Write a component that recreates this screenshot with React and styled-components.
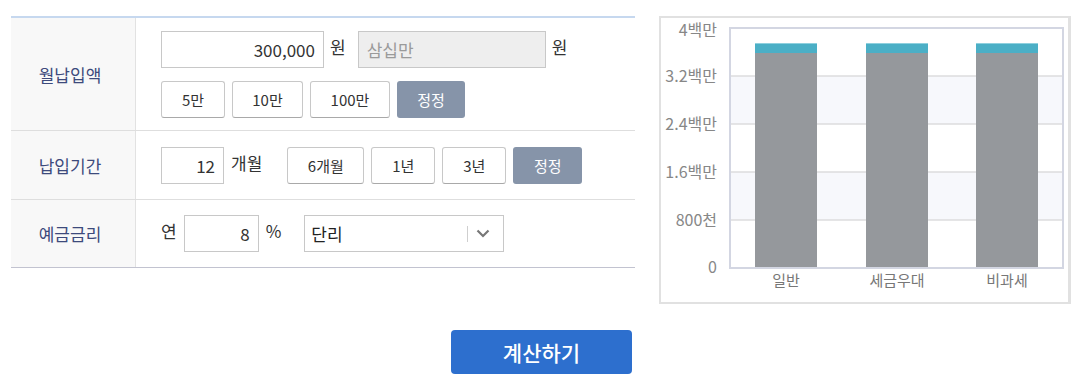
import React from "react";
import styled, { createGlobalStyle } from "styled-components";

const Global = createGlobalStyle`
  html, body { margin: 0; padding: 0; background: #fff; }
  body { font-family: "Noto Sans CJK KR", "Noto Sans", sans-serif; color: #333; }
  * { box-sizing: border-box; }
`;

const Page = styled.div`
  padding: 16px 0 0 11px;
  width: 1084px;
  height: 383px;
`;

const TopRow = styled.div`
  display: flex;
  align-items: flex-start;
  gap: 24px;
`;

const Table = styled.div`
  width: 624px;
  border-top: 2px solid #c6d8ef;
  border-bottom: 1px solid #c2c3d0;
`;

const Row = styled.div`
  display: flex;
  height: ${(p) => p.$h}px;
  border-bottom: ${(p) => (p.$last ? "none" : "1px solid #dedede")};
`;

const Label = styled.div`
  width: 125px;
  flex: none;
  background: #f8f8f8;
  border-right: 1px solid #e2e2e2;
  display: flex;
  align-items: center;
  justify-content: center;
  font-size: 17px;
  color: #3d4a7c;
  padding-right: 6px;
`;

const Cell = styled.div`
  flex: 1;
  display: flex;
  flex-direction: column;
  justify-content: center;
  gap: 13px;
  padding-left: 25px;
`;

const Line = styled.div`
  display: flex;
  align-items: center;
  gap: ${(p) => p.$gap ?? 8}px;
`;

const Input = styled.div`
  width: ${(p) => p.$w}px;
  height: ${(p) => p.$ht ?? 37}px;
  border: 1px solid #c8c8c8;
  background: ${(p) => (p.$readonly ? "#eeeeee" : "#fff")};
  color: ${(p) => (p.$readonly ? "#9a9a9a" : "#333")};
  font-size: 17px;
  display: flex;
  align-items: center;
  justify-content: ${(p) => (p.$readonly ? "flex-start" : "flex-end")};
  padding: 0 8px;
  line-height: 1;
`;

const Unit = styled.span`
  font-size: 17px;
  color: #333;
  line-height: 1;
  margin-top: -6px;
`;

const Btn = styled.div`
  width: ${(p) => p.$w}px;
  height: 37px;
  border: 1px solid #c8c8c8;
  border-bottom-color: #a9a9a9;
  border-radius: 3px;
  background: #fff;
  font-size: 15px;
  color: #333;
  display: flex;
  align-items: center;
  justify-content: center;
  line-height: 1;
`;

const ResetBtn = styled(Btn)`
  background: #8694a9;
  border: none;
  color: #fff;
`;

const Select = styled.div`
  width: 200px;
  height: 37px;
  border: 1px solid #c8c8c8;
  display: flex;
  align-items: center;
  font-size: 17px;
  color: #222;
  padding-left: 6px;
  margin-left: 16px;
  line-height: 1;
`;

const SelectText = styled.span`
  flex: 1;
`;

const Divider = styled.span`
  width: 1px;
  height: 16px;
  background: #cfcfcf;
  margin-right: 8px;
`;

const Chevron = styled.span`
  width: 27px;
  display: flex;
  align-items: center;
`;

const ChartPanel = styled.div`
  width: 412px;
  height: 288px;
  border: 2px solid #e1e1e1;
  border-right-width: 3px;
`;

const ChartSvg = styled.svg`
  display: block;
  overflow: visible;
`;

const CalcBtn = styled.div`
  margin: 26px 0 0 440px;
  width: 181px;
  height: 44px;
  border-radius: 4px;
  background: #2d6fce;
  color: #fff;
  font-size: 21px;
  font-weight: 500;
  display: flex;
  align-items: center;
  justify-content: center;
  line-height: 1;
`;

const Chart = () => {
  const grid = [
    { y: 10, ty: 14, label: "4백만" },
    { y: 58, ty: 60, label: "3.2백만" },
    { y: 106, ty: 108, label: "2.4백만" },
    { y: 154, ty: 156, label: "1.6백만" },
    { y: 202, ty: 204, label: "800천" },
    { y: 250, ty: 251, label: "0" },
  ];
  const bars = [
    { x: 94, label: "일반", cx: 125 },
    { x: 205, label: "세금우대", cx: 236 },
    { x: 315, label: "비과세", cx: 346 },
  ];
  return (
    <ChartSvg width="407" height="284" viewBox="0 0 407 284">
      <rect x="69" y="58" width="333" height="48" fill="#f7f8fc" />
      <rect x="69" y="154" width="333" height="48" fill="#f7f8fc" />
      {grid.slice(1, 5).map((g) => (
        <line key={g.y} x1="69" x2="402" y1={g.y} y2={g.y} stroke="#dcdcde" strokeWidth="1.5" />
      ))}
      {bars.map((b) => (
        <g key={b.label}>
          <rect x={b.x} y="35" width="62" height="215" fill="#95989c" />
          <rect x={b.x} y="25" width="62" height="10" fill="#4bafc6" />
          <line x1={b.x} x2={b.x + 62} y1="25.5" y2="25.5" stroke="#8fd0de" strokeWidth="1" />
        </g>
      ))}
      <rect x="69" y="10" width="333" height="240" fill="none" stroke="#d3d6e2" strokeWidth="2" />
      {grid.map((g) => (
        <text
          key={g.label}
          x="56"
          y={g.ty}
          textAnchor="end"
          dominantBaseline="middle"
          fontSize="16"
          fill="#878787"
          fontFamily='"Noto Sans CJK KR", sans-serif'
        >
          {g.label}
        </text>
      ))}
      {bars.map((b) => (
        <text
          key={b.label}
          x={b.cx}
          y="264"
          textAnchor="middle"
          dominantBaseline="middle"
          fontSize="15"
          fill="#777"
          fontFamily='"Noto Sans CJK KR", sans-serif'
        >
          {b.label}
        </text>
      ))}
    </ChartSvg>
  );
};

export default function App() {
  return (
    <>
      <Global />
      <Page>
        <TopRow>
          <Table>
            <Row $h={113}>
              <Label>월납입액</Label>
              <Cell>
                <Line $gap={6}>
                  <Input $w={163}>300,000</Input>
                  <Unit>원</Unit>
                  <Input $w={188} $readonly style={{ marginLeft: 6 }}>삼십만</Input>
                  <Unit>원</Unit>
                </Line>
                <Line $gap={7}>
                  <Btn $w={64}>5만</Btn>
                  <Btn $w={71}>10만</Btn>
                  <Btn $w={80}>100만</Btn>
                  <ResetBtn $w={68}>정정</ResetBtn>
                </Line>
              </Cell>
            </Row>
            <Row $h={69}>
              <Label>납입기간</Label>
              <Cell>
                <Line $gap={7}>
                  <Input $w={63}>12</Input>
                  <Unit>개월</Unit>
                  <Btn $w={77} style={{ marginLeft: 18 }}>6개월</Btn>
                  <Btn $w={64}>1년</Btn>
                  <Btn $w={64}>3년</Btn>
                  <ResetBtn $w={69}>정정</ResetBtn>
                </Line>
              </Cell>
            </Row>
            <Row $h={67} $last>
              <Label>예금금리</Label>
              <Cell>
                <Line $gap={7}>
                  <Unit>연</Unit>
                  <Input $w={75}>8</Input>
                  <Unit>%</Unit>
                  <Select>
                    <SelectText>단리</SelectText>
                    <Divider />
                    <Chevron>
                      <svg width="14" height="9" viewBox="0 0 14 9">
                        <path d="M1.5 1.5 L7 7 L12.5 1.5" fill="none" stroke="#777" strokeWidth="2.2" />
                      </svg>
                    </Chevron>
                  </Select>
                </Line>
              </Cell>
            </Row>
          </Table>
          <ChartPanel>
            <Chart />
          </ChartPanel>
        </TopRow>
        <CalcBtn>계산하기</CalcBtn>
      </Page>
    </>
  );
}
